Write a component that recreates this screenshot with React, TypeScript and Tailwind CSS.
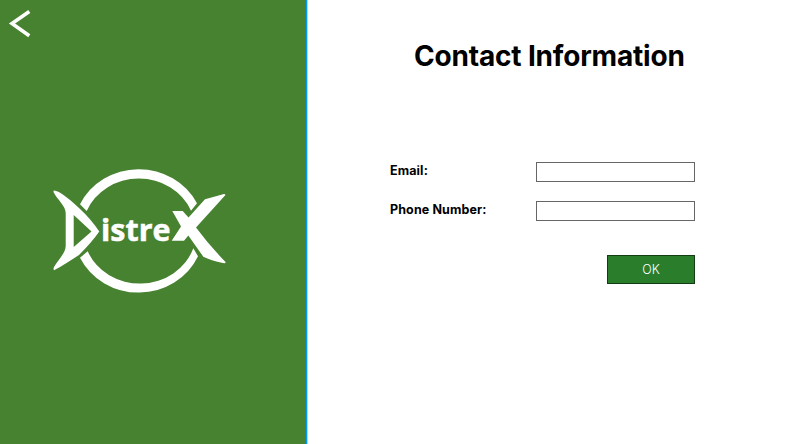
const font = "font-['Century_Gothic','Inter',sans-serif]";

function Logo() {
  return (
    <svg viewBox="50 165 180 131" className="h-[131px] w-[180px]" fill="white" role="img" aria-label="DistreX">
      <path d="M80 204.3A65.2 62 0 0 1 197 203.3L191 210.7A56.5 52.4 0 0 0 86.7 211Z" />
      <path d="M80 257.7A65.2 62 0 0 0 198 256.3L193.3 248.3A56.5 52.4 0 0 1 87.7 251.3Z" />
      <path
        fillRule="evenodd"
        d="M54 190.6C59 191 67 197 79 208Q91 219 99.3 231.5Q92 242 79 255C70 261 62 266 54 270.2Q53 269 54 267C58 260 65.7 253 65.7 246V213C65.7 206 57 199 54 193Q53 191 54 190.6ZM73.7 215V247L91.5 231.5Z"
      />
      <path d="M172.3 211H182.7L188.5 217.5L205 199.3L224 194Q226 194 225 195.5L196 227.5Q209 245 225.5 262Q226 263.5 223 263Q211 260.5 203.3 256.7L188.3 235.5L184 240.7H171.7L181 226.5Z" />
      <text
        x="101"
        y="241"
        textLength="69.5"
        lengthAdjust="spacingAndGlyphs"
        stroke="white"
        strokeWidth="0.5"
        className="font-['Open_Sans','Noto_Sans',sans-serif] text-[31px] font-bold"
      >
        istre
      </text>
    </svg>
  );
}

function Field({ label, id }: { label: string; id: string }) {
  return (
    <div className="flex h-5 w-[305px] items-center justify-between">
      <label htmlFor={id} className="pb-px text-[12.5px] leading-none font-bold tracking-[0.12px]">{label}</label>
      <input id={id} className="h-5 w-[159px] border border-[#666666] bg-white px-1 text-xs outline-none" />
    </div>
  );
}

export default function App() {
  return (
    <div className={`flex h-[444px] w-[793px] overflow-hidden bg-white text-black ${font}`}>
      <aside className="flex w-[307px] shrink-0 flex-col border-r border-[#0099ff] bg-[#478231]">
        <button aria-label="Back" className="mt-[9px] ml-2 h-[30px] w-6">
          <svg viewBox="0 0 24 30" className="h-[30px] w-6" fill="none" stroke="white" strokeWidth="3.6">
            <path d="M21.3 2.5L4 14.5L21.3 26.7" />
          </svg>
        </button>
        <div className="mt-[126px] ml-[50px]">
          <Logo />
        </div>
      </aside>
      <main className="flex-1 border-l border-[#a8dcff] pt-10 pl-[82px]">
        <h1 className="ml-6 text-[28px] leading-8 font-bold tracking-[-0.18px] whitespace-nowrap">Contact Information</h1>
        <form className="mt-[90px] flex w-[305px] flex-col" onSubmit={(e) => e.preventDefault()}>
          <Field label="Email:" id="email" />
          <div className="h-[19px]" />
          <Field label="Phone Number:" id="phone" />
          <button className="mt-[34px] h-[29px] w-[88px] self-end border border-[#123d14] bg-[#2a7d2b] pt-0.5 text-[12.5px] leading-none font-light text-white">OK</button>
        </form>
      </main>
    </div>
  );
}
